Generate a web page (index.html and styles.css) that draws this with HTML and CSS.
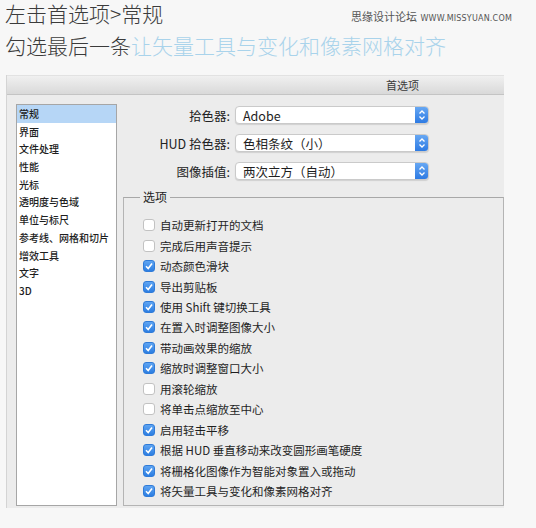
FILE: index.html
```html
<!DOCTYPE html>
<html lang="zh">
<head>
<meta charset="utf-8">
<link rel="stylesheet" href="styles.css">
</head>
<body>
<div class="header">
  <div class="line1">
    <span class="h-text">左击首选项&gt;常规</span>
    <span class="mark"><span class="mark-cn">思缘设计论坛</span> <span class="mark-en">WWW.MISSYUAN.COM</span></span>
  </div>
  <div class="line2"><span class="h-text">勾选最后一条</span><span class="h-blue">让矢量工具与变化和像素网格对齐</span></div>
</div>

<div class="window">
  <div class="titlebar"><span>首选项</span></div>
  <div class="wbody">
    <ul class="list">
      <li class="sel">常规</li>
      <li>界面</li>
      <li>文件处理</li>
      <li>性能</li>
      <li>光标</li>
      <li>透明度与色域</li>
      <li>单位与标尺</li>
      <li>参考线、网格和切片</li>
      <li>增效工具</li>
      <li>文字</li>
      <li>3D</li>
    </ul>
    <div class="main">
      <div class="prow">
        <span class="plabel">拾色器:</span>
        <div class="popup"><span class="ptext">Adobe</span><span class="step"><svg width="8" height="12" viewBox="0 0 8 12"><path d="M1.5 4.5 L4 2 L6.5 4.5 M1.5 7.5 L4 10 L6.5 7.5" fill="none" stroke="#fff" stroke-width="1.3"/></svg></span></div>
      </div>
      <div class="prow">
        <span class="plabel">HUD 拾色器:</span>
        <div class="popup"><span class="ptext">色相条纹（小）</span><span class="step"><svg width="8" height="12" viewBox="0 0 8 12"><path d="M1.5 4.5 L4 2 L6.5 4.5 M1.5 7.5 L4 10 L6.5 7.5" fill="none" stroke="#fff" stroke-width="1.3"/></svg></span></div>
      </div>
      <div class="prow">
        <span class="plabel">图像插值:</span>
        <div class="popup"><span class="ptext">两次立方（自动）</span><span class="step"><svg width="8" height="12" viewBox="0 0 8 12"><path d="M1.5 4.5 L4 2 L6.5 4.5 M1.5 7.5 L4 10 L6.5 7.5" fill="none" stroke="#fff" stroke-width="1.3"/></svg></span></div>
      </div>
      <fieldset class="group">
        <legend>选项</legend>
        <div class="crow"><span class="cb"></span>自动更新打开的文档</div>
        <div class="crow"><span class="cb"></span>完成后用声音提示</div>
        <div class="crow"><span class="cb on"><svg width="10" height="10" viewBox="0 0 10 10"><path d="M2 5.2 L4.2 7.5 L8 2.5" fill="none" stroke="#fff" stroke-width="1.6"/></svg></span>动态颜色滑块</div>
        <div class="crow"><span class="cb on"><svg width="10" height="10" viewBox="0 0 10 10"><path d="M2 5.2 L4.2 7.5 L8 2.5" fill="none" stroke="#fff" stroke-width="1.6"/></svg></span>导出剪贴板</div>
        <div class="crow"><span class="cb on"><svg width="10" height="10" viewBox="0 0 10 10"><path d="M2 5.2 L4.2 7.5 L8 2.5" fill="none" stroke="#fff" stroke-width="1.6"/></svg></span>使用 Shift 键切换工具</div>
        <div class="crow"><span class="cb on"><svg width="10" height="10" viewBox="0 0 10 10"><path d="M2 5.2 L4.2 7.5 L8 2.5" fill="none" stroke="#fff" stroke-width="1.6"/></svg></span>在置入时调整图像大小</div>
        <div class="crow"><span class="cb on"><svg width="10" height="10" viewBox="0 0 10 10"><path d="M2 5.2 L4.2 7.5 L8 2.5" fill="none" stroke="#fff" stroke-width="1.6"/></svg></span>带动画效果的缩放</div>
        <div class="crow"><span class="cb on"><svg width="10" height="10" viewBox="0 0 10 10"><path d="M2 5.2 L4.2 7.5 L8 2.5" fill="none" stroke="#fff" stroke-width="1.6"/></svg></span>缩放时调整窗口大小</div>
        <div class="crow"><span class="cb"></span>用滚轮缩放</div>
        <div class="crow"><span class="cb"></span>将单击点缩放至中心</div>
        <div class="crow"><span class="cb on"><svg width="10" height="10" viewBox="0 0 10 10"><path d="M2 5.2 L4.2 7.5 L8 2.5" fill="none" stroke="#fff" stroke-width="1.6"/></svg></span>启用轻击平移</div>
        <div class="crow"><span class="cb on"><svg width="10" height="10" viewBox="0 0 10 10"><path d="M2 5.2 L4.2 7.5 L8 2.5" fill="none" stroke="#fff" stroke-width="1.6"/></svg></span>根据 HUD 垂直移动来改变圆形画笔硬度</div>
        <div class="crow"><span class="cb on"><svg width="10" height="10" viewBox="0 0 10 10"><path d="M2 5.2 L4.2 7.5 L8 2.5" fill="none" stroke="#fff" stroke-width="1.6"/></svg></span>将栅格化图像作为智能对象置入或拖动</div>
        <div class="crow"><span class="cb on"><svg width="10" height="10" viewBox="0 0 10 10"><path d="M2 5.2 L4.2 7.5 L8 2.5" fill="none" stroke="#fff" stroke-width="1.6"/></svg></span>将矢量工具与变化和像素网格对齐</div>
      </fieldset>
    </div>
  </div>
</div>
</body>
</html>
```

FILE: styles.css
```css
* { box-sizing: border-box; }
html, body { margin: 0; padding: 0; }
body {
  width: 536px;
  height: 528px;
  background: #f7f7f7;
  font-family: "Noto Sans CJK SC", "Noto Sans", sans-serif;
  overflow: hidden;
}
.header { padding: 0 0 0 5px; }
.line1 {
  display: flex;
  justify-content: space-between;
  align-items: center;
  height: 26px;
}
.h-text, .h-blue {
  font-size: 21px;
  line-height: 26px;
  font-weight: 300;
  color: #3b3b3b;
}
.h-blue { color: #a9d3eb; }
.line2 { margin-top: 6px; height: 26px; white-space: nowrap; }
.mark {
  padding-right: 24px;
  margin-top: 6px;
  color: #555;
  white-space: nowrap;
  line-height: 14px;
}
.mark-cn { font-size: 11px; }
.mark-en { font-size: 8px; font-family: "DejaVu Sans", sans-serif; letter-spacing: 0.2px; }

.window {
  margin-top: 17px;
  margin-left: 6px;
  width: 498px;
  height: 433px;
  background: #ececec;
  border-left: 1px solid #d4d4d4;
  display: flex;
  flex-direction: column;
  overflow: hidden;
}
.titlebar {
  height: 20px;
  flex: none;
  background: linear-gradient(#f0f0f0, #d9d9d9);
  border-top: 1px solid #e2e2e2;
  border-bottom: 1px solid #c4c4c4;
  display: flex;
  justify-content: flex-end;
  align-items: center;
  padding-right: 85px;
  font-size: 11px;
  color: #3a3a3a;
}
.wbody {
  flex: 1;
  display: flex;
  padding: 9px 0 2px 9px;
}
.list {
  list-style: none;
  margin: 0;
  padding: 0;
  width: 101px;
  background: #fff;
  border: 1px solid #a6a6a6;
  flex: none;
}
.list li {
  height: 17.7px;
  line-height: 17.7px;
  padding-left: 2px;
  font-size: 10px;
  font-weight: 500;
  color: #1e1e1e;
  white-space: nowrap;
}
.list li.sel { background: #b6d6f6; }
.main {
  flex: 1;
  margin-left: 6px;
  display: flex;
  flex-direction: column;
}
.prow {
  display: flex;
  align-items: center;
  height: 18px;
  margin-top: 10px;
}
.prow:first-child { margin-top: 2px; }
.plabel {
  width: 107px;
  text-align: right;
  font-size: 12.5px;
  color: #222;
  white-space: nowrap;
}
.popup {
  margin-left: 5px;
  width: 194px;
  height: 18px;
  background: #fff;
  border: 1px solid #cacaca;
  border-radius: 4px;
  box-shadow: 0 1px 1px rgba(0,0,0,0.12);
  display: flex;
  align-items: center;
  justify-content: space-between;
  overflow: hidden;
}
.ptext {
  padding-left: 7px;
  font-size: 12.5px;
  color: #1e1e1e;
  white-space: nowrap;
}
.step {
  width: 14px;
  height: 18px;
  margin-right: -1px;
  background: linear-gradient(#6aaaf4, #2a78e2);
  border-radius: 0 4px 4px 0;
  display: flex;
  align-items: center;
  justify-content: center;
}
.group {
  margin: 10px 0 0 0;
  padding: 11px 0 3px 16px;
  border: 1px solid #b4b4b4;
  border-top-color: #a8a8a8;
  flex: 1;
  min-width: 0;
}
.group legend {
  padding: 0 3px;
  font-size: 12px;
  line-height: 14px;
  color: #222;
}
.crow {
  height: 20.46px;
  display: flex;
  align-items: center;
  font-size: 11.5px;
  color: #1f1f1f;
  white-space: nowrap;
}
.cb {
  width: 12px;
  height: 12px;
  margin-left: 3px;
  margin-right: 5px;
  border-radius: 3px;
  background: #fff;
  border: 1px solid #c2c2c2;
  display: flex;
  align-items: center;
  justify-content: center;
  flex: none;
}
.cb.on {
  background: linear-gradient(#5ea4f2, #2c7ee2);
  border-color: #2f7bd8;
}
```
